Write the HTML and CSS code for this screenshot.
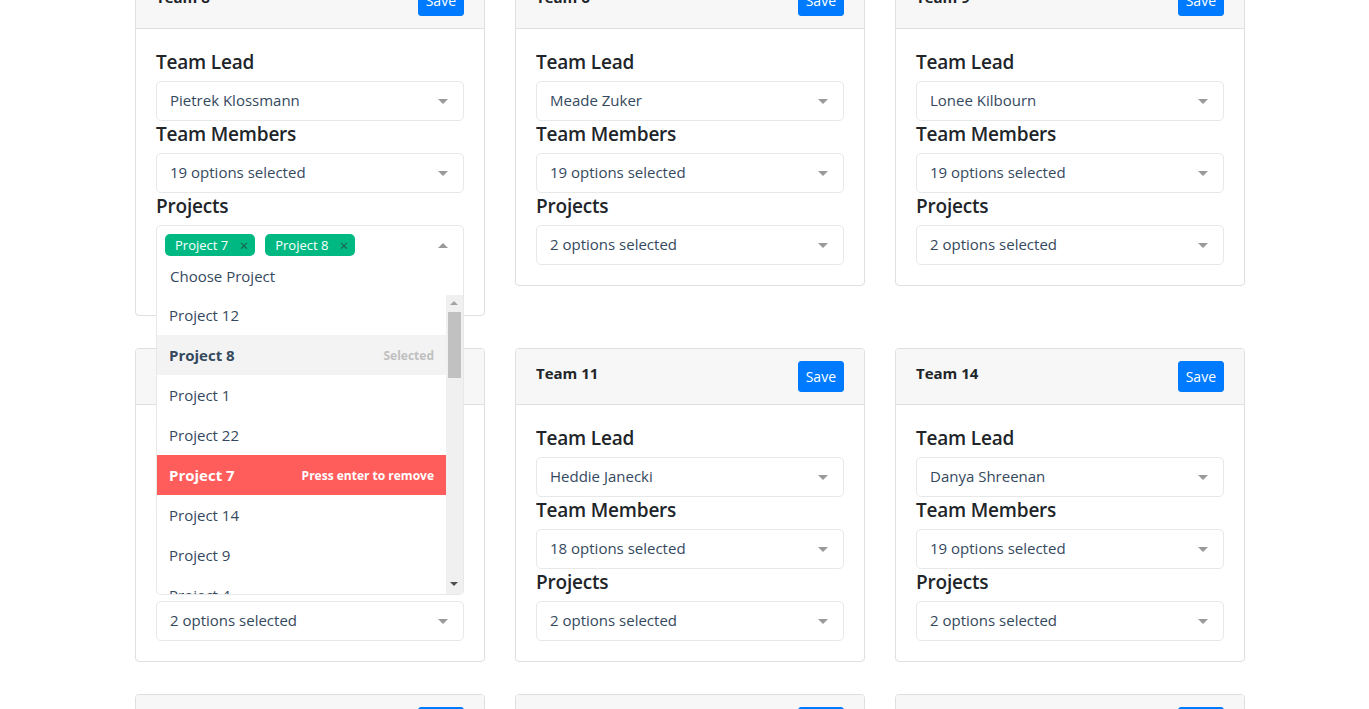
FILE: index.html
```html
<!DOCTYPE html>
<html lang="en">
<head>
<meta charset="utf-8">
<title>Teams</title>
<link rel="stylesheet" href="styles.css">
</head>
<body>
<div class="page">
  <div class="grid">

    <div class="card">
      <div class="card-header"><h6 class="card-title">Team 8</h6><button class="btn">Save</button></div>
      <div class="card-body">
        <label class="lbl">Team Lead</label>
        <div class="ms"><span class="ms-value">Pietrek Klossmann</span></div>
        <label class="lbl">Team Members</label>
        <div class="ms"><span class="ms-value">19 options selected</span></div>
        <label class="lbl">Projects</label>
        <div class="ms open">
          <div class="tags">
            <span class="tag">Project 7<i class="tag-x">×</i></span>
            <span class="tag">Project 8<i class="tag-x">×</i></span>
          </div>
          <div class="ms-input">Choose Project</div>
          <div class="dropdown">
            <ul class="options">
              <li class="opt">Project 12</li>
              <li class="opt selected"><span>Project 8</span><span class="hint">Selected</span></li>
              <li class="opt">Project 1</li>
              <li class="opt">Project 22</li>
              <li class="opt selected highlight"><span>Project 7</span><span class="hint">Press enter to remove</span></li>
              <li class="opt">Project 14</li>
              <li class="opt">Project 9</li>
              <li class="opt">Project 4</li>
            </ul>
            <div class="scrollbar">
              <span class="sb-up"></span>
              <span class="sb-thumb"></span>
              <span class="sb-down"></span>
            </div>
          </div>
        </div>
      </div>
    </div>

    <div class="card">
      <div class="card-header"><h6 class="card-title">Team 6</h6><button class="btn">Save</button></div>
      <div class="card-body">
        <label class="lbl">Team Lead</label>
        <div class="ms"><span class="ms-value">Meade Zuker</span></div>
        <label class="lbl">Team Members</label>
        <div class="ms"><span class="ms-value">19 options selected</span></div>
        <label class="lbl">Projects</label>
        <div class="ms"><span class="ms-value">2 options selected</span></div>
      </div>
    </div>

    <div class="card">
      <div class="card-header"><h6 class="card-title">Team 9</h6><button class="btn">Save</button></div>
      <div class="card-body">
        <label class="lbl">Team Lead</label>
        <div class="ms"><span class="ms-value">Lonee Kilbourn</span></div>
        <label class="lbl">Team Members</label>
        <div class="ms"><span class="ms-value">19 options selected</span></div>
        <label class="lbl">Projects</label>
        <div class="ms"><span class="ms-value">2 options selected</span></div>
      </div>
    </div>

    <div class="card">
      <div class="card-header"><h6 class="card-title">Team 2</h6><button class="btn">Save</button></div>
      <div class="card-body">
        <label class="lbl">Team Lead</label>
        <div class="ms"><span class="ms-value">Kiley Bratton</span></div>
        <label class="lbl">Team Members</label>
        <div class="ms"><span class="ms-value">19 options selected</span></div>
        <label class="lbl">Projects</label>
        <div class="ms"><span class="ms-value">2 options selected</span></div>
      </div>
    </div>

    <div class="card">
      <div class="card-header"><h6 class="card-title">Team 11</h6><button class="btn">Save</button></div>
      <div class="card-body">
        <label class="lbl">Team Lead</label>
        <div class="ms"><span class="ms-value">Heddie Janecki</span></div>
        <label class="lbl">Team Members</label>
        <div class="ms"><span class="ms-value">18 options selected</span></div>
        <label class="lbl">Projects</label>
        <div class="ms"><span class="ms-value">2 options selected</span></div>
      </div>
    </div>

    <div class="card">
      <div class="card-header"><h6 class="card-title">Team 14</h6><button class="btn">Save</button></div>
      <div class="card-body">
        <label class="lbl">Team Lead</label>
        <div class="ms"><span class="ms-value">Danya Shreenan</span></div>
        <label class="lbl">Team Members</label>
        <div class="ms"><span class="ms-value">19 options selected</span></div>
        <label class="lbl">Projects</label>
        <div class="ms"><span class="ms-value">2 options selected</span></div>
      </div>
    </div>

    <div class="card">
      <div class="card-header"><h6 class="card-title">Team 3</h6><button class="btn">Save</button></div>
      <div class="card-body">
        <label class="lbl">Team Lead</label>
        <div class="ms"><span class="ms-value">Arri Bowmer</span></div>
      </div>
    </div>

    <div class="card">
      <div class="card-header"><h6 class="card-title">Team 12</h6><button class="btn">Save</button></div>
      <div class="card-body">
        <label class="lbl">Team Lead</label>
        <div class="ms"><span class="ms-value">Jobi Tollmache</span></div>
      </div>
    </div>

    <div class="card">
      <div class="card-header"><h6 class="card-title">Team 7</h6><button class="btn">Save</button></div>
      <div class="card-body">
        <label class="lbl">Team Lead</label>
        <div class="ms"><span class="ms-value">Corny Pilkington</span></div>
      </div>
    </div>

  </div>
</div>
</body>
</html>
```
FILE: styles.css
```css
* { box-sizing: border-box; }

html, body {
  margin: 0;
  background: #fff;
  overflow: hidden;
}

body {
  font-family: "Open Sans", "Noto Sans", sans-serif;
  color: #212529;
  font-size: 16px;
}

.page {
  padding-left: 11px;
}

.grid {
  width: 1110px;
  margin: -28px auto 0;
  display: grid;
  grid-template-columns: repeat(3, 350px);
  column-gap: 30px;
  row-gap: 32px;
  align-items: start;
}

.card {
  background: #fff;
  border: 1px solid #dfdfdf;
  border-radius: 4px;
}

.card-header {
  display: flex;
  justify-content: space-between;
  align-items: flex-start;
  padding: 12px 20px;
  background: #f7f7f7;
  border-bottom: 1px solid #dfdfdf;
  border-radius: 3px 3px 0 0;
}

.card-title {
  margin: 0;
  font-size: 15px;
  font-weight: 700;
  line-height: 24px;
  color: #212529;
}

.btn {
  font-family: inherit;
  font-size: 14px;
  line-height: 21px;
  padding: 4px 7px;
  color: #fff;
  background: #007bff;
  border: 1px solid #007bff;
  border-radius: 3px;
}

.card-body {
  padding: 20px;
}

.lbl {
  display: block;
  font-size: 19px;
  font-weight: 600;
  letter-spacing: -0.2px;
  line-height: 24px;
  padding-top: 1px;
  margin-bottom: 7px;
  color: #212529;
}

.ms {
  position: relative;
  height: 40px;
  border: 1px solid #e8e8e8;
  border-radius: 5px;
  padding: 0 40px 2px 13px;
  display: flex;
  align-items: center;
  font-size: 15px;
  color: #35495e;
  background: #fff;
}

.ms::after {
  content: "";
  position: absolute;
  right: 15px;
  top: 17px;
  border-style: solid;
  border-width: 5px 5px 0;
  border-color: #999 transparent transparent;
}

.ms-value {
  white-space: nowrap;
}

.ms.open {
  display: block;
  height: auto;
  padding: 8px 40px 0 8px;
  margin-bottom: -1px;
  border-radius: 5px 5px 0 0;
  z-index: 50;
}

.ms.open::after {
  border-width: 0 5px 5px;
  border-color: transparent transparent #999;
}

.tags {
  display: flex;
  gap: 10px;
  margin-bottom: 9px;
}

.tag {
  position: relative;
  display: inline-block;
  height: 22px;
  padding: 4px 27px 4px 10px;
  font-size: 13px;
  line-height: 14px;
  color: #fff;
  background: #00b982;
  border-radius: 5px;
}

.tag-x {
  position: absolute;
  right: 7px;
  top: 3px;
  font-style: normal;
  font-size: 15px;
  line-height: 16px;
  color: #1f5e4b;
}

.ms-input {
  padding-left: 5px;
  height: 22px;
  line-height: 22px;
  margin-bottom: 8px;
  font-size: 15px;
  color: #35495e;
}

.dropdown {
  position: absolute;
  top: 100%;
  left: -1px;
  right: -1px;
  height: 300px;
  display: flex;
  background: #fff;
  border: 1px solid #e8e8e8;
  border-top: none;
  border-radius: 0 0 5px 5px;
  overflow: hidden;
}

.options {
  flex: 1;
  margin: 0;
  padding: 0;
  list-style: none;
  overflow: hidden;
}

.opt {
  display: flex;
  justify-content: space-between;
  align-items: center;
  height: 40px;
  padding: 0 12px;
  font-size: 15px;
  color: #35495e;
}

.opt.selected {
  background: #f3f3f3;
  font-weight: 700;
}

.opt .hint {
  font-size: 12px;
  font-weight: 700;
  color: #c0c0c0;
}

.opt.highlight {
  background: #ff5c5c;
  color: #fff;
}

.opt.highlight .hint {
  color: #fff;
}

.scrollbar {
  position: relative;
  width: 17px;
  background: #f0f0f0;
}

.sb-up, .sb-down {
  position: absolute;
  left: 4px;
  border-style: solid;
}

.sb-up {
  top: 6px;
  border-width: 0 4px 4px;
  border-color: transparent transparent #a3a3a3;
}

.sb-down {
  bottom: 8px;
  border-width: 4px 4px 0;
  border-color: #505050 transparent transparent;
}

.sb-thumb {
  position: absolute;
  top: 17px;
  left: 2px;
  width: 13px;
  height: 66px;
  background: #c1c1c1;
}
```
